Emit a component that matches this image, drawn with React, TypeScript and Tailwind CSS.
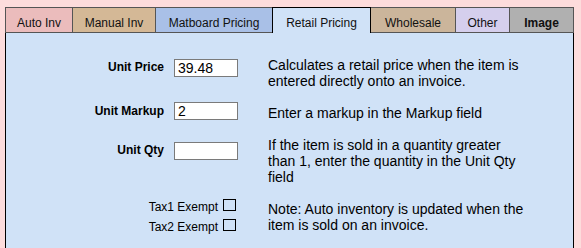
import React from "react";

const tabs = [
  { label: "Auto Inv", cls: "w-[68px] border-l border-r border-b border-[#555] bg-[#ebbcbc]" },
  { label: "Manual Inv", cls: "w-[83px] border-r border-b border-[#555] bg-[#d4b896]" },
  { label: "Matboard Pricing", cls: "w-[116px] border-b border-[#555] bg-[#a9c0e7]" },
  { label: "Retail Pricing", cls: "w-[99px] border-l border-r border-black bg-[#d0e2f7]" },
  { label: "Wholesale", cls: "w-[85px] border-r border-b border-[#555] bg-[#cbb59b]" },
  { label: "Other", cls: "w-[54px] border-r border-b border-[#555] bg-[#d5cfed]" },
  { label: "Image", cls: "w-[64px] border-r border-b border-[#555] bg-[#b0b0b0] font-bold" },
];

function Check() {
  return <span className="block w-[13px] h-[12px] border border-black" />;
}

export default function App() {
  return (
    <div
      className="h-[248px] w-[581px] overflow-hidden bg-[#fddcdc] pl-[5px] pt-[7px] text-black"
      style={{ fontFamily: '"Liberation Sans", Arial, sans-serif' }}
    >
      <div className="w-[569px]">
        <div className="flex">
          {tabs.map((t) => (
            <div
              key={t.label}
              className={`h-[26px] border-t text-center text-[12px] leading-4 pt-[7px] text-[#111] ${t.cls}`}
            >
              {t.label}
            </div>
          ))}
        </div>

        <div className="h-[216px] border-l border-r border-black bg-[#d0e2f7] pt-[24px]">
          {/* Unit Price */}
          <div className="flex h-[45px] items-start">
            <div className="w-[158px] mt-[2px] text-right text-[12px] leading-4 font-bold">Unit Price</div>
            <input
              readOnly
              value="39.48"
              className="ml-[10px] mt-[2px] h-[18px] w-[64px] border border-[#7a7a7a] bg-white pl-[3px] text-[14px] leading-4 outline-none"
            />
            <p className="ml-[30px] w-[290px] text-[14px] leading-4">
              Calculates a retail price when the item is
              <br />
              entered directly onto an invoice.
            </p>
          </div>

          {/* Unit Markup */}
          <div className="flex h-[35px] items-start">
            <div className="w-[158px] mt-[1px] text-right text-[12px] leading-4 font-bold">Unit Markup</div>
            <input
              readOnly
              value="2"
              className="ml-[10px] h-[18px] w-[64px] border border-[#7a7a7a] bg-white pl-[3px] text-[14px] leading-4 outline-none"
            />
            <p className="ml-[30px] mt-[3px] w-[290px] text-[14px] leading-4">
              Enter a markup in the Markup field
            </p>
          </div>

          {/* Unit Qty */}
          <div className="flex h-[62px] items-start">
            <div className="w-[158px] mt-[5px] text-right text-[12px] leading-4 font-bold">Unit Qty</div>
            <input
              readOnly
              value=""
              className="ml-[10px] mt-[5px] h-[18px] w-[64px] border border-[#7a7a7a] bg-white pl-[3px] text-[14px] leading-4 outline-none"
            />
            <p className="ml-[30px] w-[290px] text-[14px] leading-4">
              If the item is sold in a quantity greater
              <br />
              than 1, enter the quantity in the Unit Qty
              <br />
              field
            </p>
          </div>

          {/* Tax exempt */}
          <div className="flex items-start">
            <div className="w-[230px] text-[12px] leading-4">
              <div className="flex h-[20px] items-start justify-end gap-[5px]">
                <span>Tax1 Exempt</span>
                <Check />
              </div>
              <div className="flex h-[20px] items-start justify-end gap-[5px]">
                <span>Tax2 Exempt</span>
                <Check />
              </div>
            </div>
            <p className="ml-[32px] mt-[2px] w-[290px] text-[14px] leading-4">
              Note: Auto inventory is updated when the
              <br />
              item is sold on an invoice.
            </p>
          </div>
        </div>
      </div>
    </div>
  );
}
